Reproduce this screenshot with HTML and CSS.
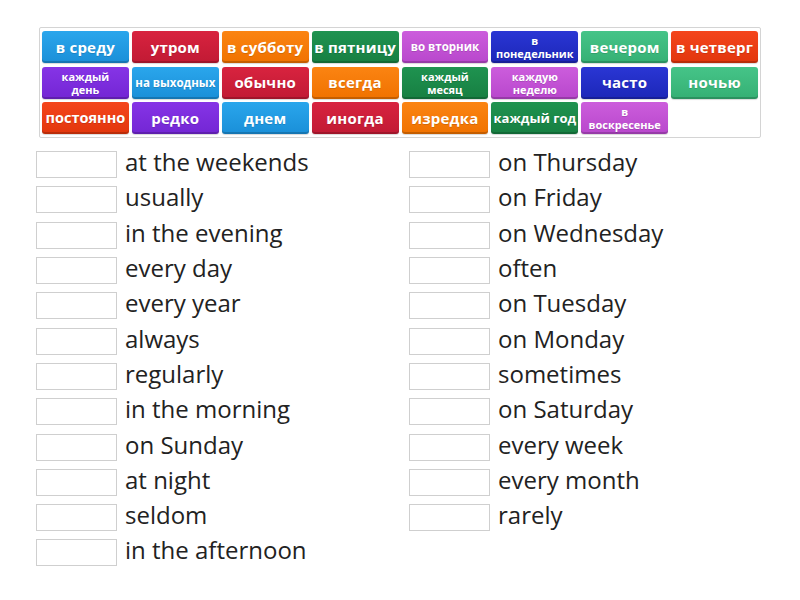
FILE: index.html
```html
<!DOCTYPE html>
<html>
<head>
<meta charset="utf-8">
<link rel="stylesheet" href="styles.css">
</head>
<body>
<div class="board">
  <div class="tile blue">в среду</div>
  <div class="tile red">утром</div>
  <div class="tile orange">в субботу</div>
  <div class="tile green">в пятницу</div>
  <div class="tile magenta sm">во вторник</div>
  <div class="tile navy xs">в<br>понедельник</div>
  <div class="tile teal">вечером</div>
  <div class="tile scarlet">в четверг</div>

  <div class="tile purple xs">каждый<br>день</div>
  <div class="tile blue sm">на выходных</div>
  <div class="tile red">обычно</div>
  <div class="tile orange">всегда</div>
  <div class="tile green xs">каждый<br>месяц</div>
  <div class="tile magenta xs">каждую<br>неделю</div>
  <div class="tile navy">часто</div>
  <div class="tile teal">ночью</div>

  <div class="tile scarlet md">постоянно</div>
  <div class="tile purple">редко</div>
  <div class="tile blue">днем</div>
  <div class="tile red">иногда</div>
  <div class="tile orange">изредка</div>
  <div class="tile green md2">каждый год</div>
  <div class="tile magenta xs">в<br>воскресенье</div>
</div>

<div class="list">
  <div class="col">
    <div class="row"><span class="box"></span><span class="label">at the weekends</span></div>
    <div class="row"><span class="box"></span><span class="label">usually</span></div>
    <div class="row"><span class="box"></span><span class="label">in the evening</span></div>
    <div class="row"><span class="box"></span><span class="label">every day</span></div>
    <div class="row"><span class="box"></span><span class="label">every year</span></div>
    <div class="row"><span class="box"></span><span class="label">always</span></div>
    <div class="row"><span class="box"></span><span class="label">regularly</span></div>
    <div class="row"><span class="box"></span><span class="label">in the morning</span></div>
    <div class="row"><span class="box"></span><span class="label">on Sunday</span></div>
    <div class="row"><span class="box"></span><span class="label">at night</span></div>
    <div class="row"><span class="box"></span><span class="label">seldom</span></div>
    <div class="row"><span class="box"></span><span class="label">in the afternoon</span></div>
  </div>
  <div class="col">
    <div class="row"><span class="box"></span><span class="label">on Thursday</span></div>
    <div class="row"><span class="box"></span><span class="label">on Friday</span></div>
    <div class="row"><span class="box"></span><span class="label">on Wednesday</span></div>
    <div class="row"><span class="box"></span><span class="label">often</span></div>
    <div class="row"><span class="box"></span><span class="label">on Tuesday</span></div>
    <div class="row"><span class="box"></span><span class="label">on Monday</span></div>
    <div class="row"><span class="box"></span><span class="label">sometimes</span></div>
    <div class="row"><span class="box"></span><span class="label">on Saturday</span></div>
    <div class="row"><span class="box"></span><span class="label">every week</span></div>
    <div class="row"><span class="box"></span><span class="label">every month</span></div>
    <div class="row"><span class="box"></span><span class="label">rarely</span></div>
  </div>
</div>
</body>
</html>
```
FILE: styles.css
```css
html, body {
  margin: 0;
  padding: 0;
  background: #ffffff;
}
body {
  font-family: "Open Sans", "Liberation Sans", sans-serif;
}
.board {
  box-sizing: border-box;
  width: 722px;
  margin: 27px 0 0 39px;
  padding: 3px 2px 3px 2px;
  border: 1px solid #d4d4d4;
  border-radius: 2px;
  display: grid;
  grid-template-columns: repeat(8, 1fr);
  grid-auto-rows: 32px;
  column-gap: 3px;
  row-gap: 3.5px;
}
.tile {
  border-radius: 3px;
  color: #ffffff;
  font-weight: 700;
  font-size: 15px;
  line-height: 1;
  display: flex;
  align-items: center;
  justify-content: center;
  text-align: center;
  white-space: nowrap;
  box-shadow: inset 0 -2px 0 rgba(0,0,0,0.18), 0 1px 1px rgba(0,0,0,0.15);
  text-shadow: 0 1px 0 rgba(0,0,0,0.15);
  letter-spacing: 0.2px;
}
.tile.md { font-size: 14.5px; letter-spacing: 0; }
.tile.md2 { font-size: 13px; letter-spacing: 0; }
.tile.sm { font-size: 11.5px; letter-spacing: 0; }
.tile.xs { font-size: 11px; line-height: 13px; letter-spacing: 0; }
.blue { background: linear-gradient(#2aa6ec, #1a8fd8); }
.red { background: linear-gradient(#d8233f, #c11a34); }
.orange { background: linear-gradient(#fb8412, #f07200); }
.green { background: linear-gradient(#1f9350, #177f42); }
.magenta { background: linear-gradient(#cc5ddc, #b847cc); }
.navy { background: linear-gradient(#2a36d4, #1c27b8); }
.teal { background: linear-gradient(#45c488, #35b074); }
.scarlet { background: linear-gradient(#f4451c, #e2360c); }
.purple { background: linear-gradient(#8634e6, #7326d4); }

.list {
  display: grid;
  grid-template-columns: 373px auto;
  padding-left: 36px;
  margin-top: 9px;
}
.row {
  display: flex;
  align-items: center;
  height: 35.3px;
}
.box {
  box-sizing: border-box;
  width: 81px;
  height: 27px;
  border: 1px solid #cfcfcf;
  background: #fff;
  flex: none;
}
.label {
  margin-left: 8px;
  font-size: 24px;
  color: #222222;
  line-height: 27px;
  position: relative;
  top: -3px;
}
```
